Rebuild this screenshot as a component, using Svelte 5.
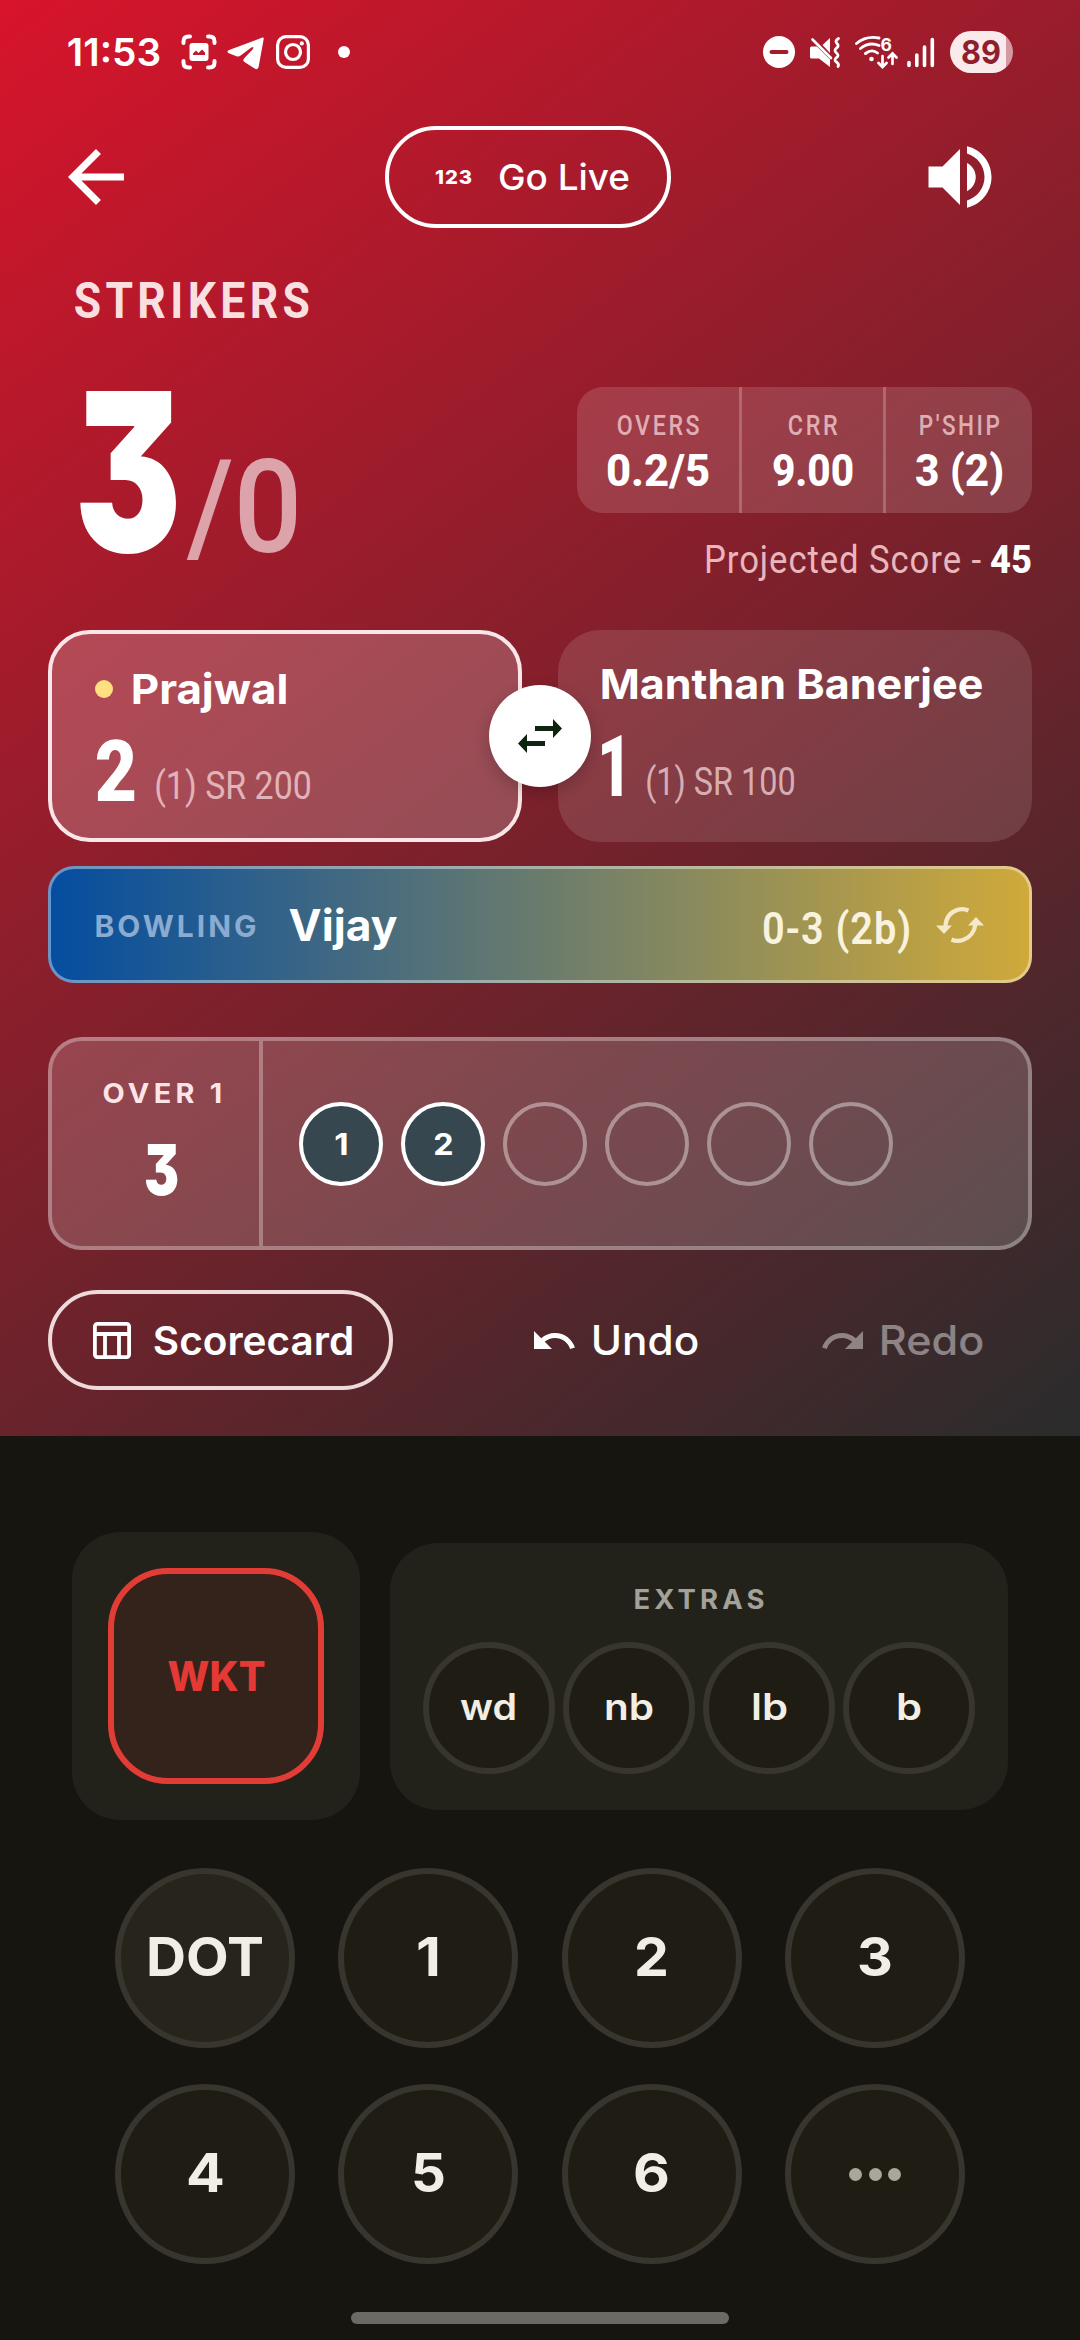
<script>
  const stats = [
    { label: 'OVERS', lw: 80, value: '0.2/5', vw: 100, cls: 'overs' },
    { label: 'CRR', lw: 47, value: '9.00', vw: 78, cls: 'crr' },
    { label: "P'SHIP", lw: 78, value: '3 (2)', vw: 85, cls: 'pship' }
  ];
  const balls = ['1', '2', '', '', '', ''];
  const extras = [
    { t: 'wd', w: 53 },
    { t: 'nb', w: 46 },
    { t: 'lb', w: 33 },
    { t: 'b', w: 22 }
  ];
  const keys = [
    { t: 'DOT', w: 112 },
    { t: '1', w: 19 },
    { t: '2', w: 29 },
    { t: '3', w: 30 },
    { t: '4', w: 33 },
    { t: '5', w: 29 },
    { t: '6', w: 31 },
    { t: '', w: 0 }
  ];
  const CAP = { sans: 0.727, cond: 0.711 };
</script>

<!-- Text fitted to a width; h is the cap height and the box bottom is the baseline. -->
{#snippet fit(text, w, h, face, weight, ls = 0, bear = 0.055)}
  {@const size = h / CAP[face]}
  {@const b = size * bear * (face === 'cond' ? 0.85 : 1)}
  <svg class="fit {face}" width={w} height={h}>
    <text x={-b} y={h} font-size={size} font-weight={weight} letter-spacing={ls}
      textLength={w + 2 * b + ls} lengthAdjust="spacingAndGlyphs">{text}</text>
  </svg>
{/snippet}

<div class="screen">
  <section class="hero">
    <div class="status">
      <div class="status-left">
        {@render fit('11:53', 92, 28, 'sans', 600, 0, 0.03)}
        <svg class="i-shot" width="36" height="36" viewBox="0 0 36 36" fill="none" stroke="#fff" stroke-width="4" stroke-linecap="round">
          <path d="M2.500 9V7.500q0-5 5-5H9M27 2.500h1.500q5 0 5 5V9M33.500 27v1.500q0 5-5 5H27M9 33.500H7.500q-5 0-5-5V27" />
          <rect x="8.500" y="9" width="19" height="18" rx="3" fill="#fff" stroke="none" />
          <path d="M12 21v-1.500l3-3 2.500 2.500 3.500-3.500 3 3V21z" fill="#c41830" stroke="none" />
        </svg>
        <svg class="i-plane" width="37" height="33" viewBox="0 0 37 33" fill="#fff">
          <path d="M35.500.5 1.500 13.200Q-.8 14.800 1.800 16.300L9.500 19.300Q12 20 14 18.300L24 10.800Q28 8.800 25.500 12.500L17 21.500Q15.300 23.800 17.800 25.300L28 31.800Q31 33 31.600 30L36.700 2Q36.900 0 35.500.5Z" />
        </svg>
        <svg class="i-insta" width="34" height="34" viewBox="0 0 34 34" fill="none" stroke="#fff" stroke-width="3.200">
          <rect x="1.600" y="1.600" width="30.800" height="30.800" rx="8.500" />
          <circle cx="17" cy="17" r="7.500" />
          <circle cx="25.800" cy="8.400" r="2.100" fill="#fff" stroke="none" />
        </svg>
        <span class="more"></span>
      </div>
      <div class="status-right">
        <svg class="i-dnd" width="32" height="32" viewBox="0 0 32 32">
          <circle cx="16" cy="16" r="16" fill="#fff" />
          <path d="M8.500 16h15" stroke="#a41b2b" stroke-width="4" stroke-linecap="round" />
        </svg>
        <svg class="i-mute" width="30" height="31" viewBox="0 0 30 31" fill="none" stroke="#fff">
          <path d="M0 11q0-1.500 1.500-1.500H7L20 22.500V30L9 21.500H1.500Q0 21.500 0 20zM20 1v15L12.500 8z" fill="#fff" stroke="none" />
          <path d="M2.500 2.500 21 21" stroke-width="2.600" stroke-linecap="round" />
          <path d="M28.500 1.500q-4 2.500-1.500 5t-.5 4.500q-3 2.500 0 5t0 4.500q-3 2.500 0 4.500t1.500 4.500" stroke-width="2.800" stroke-linecap="round" />
        </svg>
        <svg class="i-wifi" width="43" height="34" viewBox="0 0 43 34" fill="none" stroke="#fff" stroke-width="2.900" stroke-linecap="round">
          <path d="M1.500 8.500Q11 .5 24 3M5.500 13.500Q14 6.500 24 10.500M10.500 18.500Q17 13.500 22.500 18" />
          <circle cx="16.500" cy="24" r="2.300" fill="#fff" stroke="none" />
          <text class="six" x="25.500" y="15.500">6</text>
          <path d="M27.500 21v10M23.500 28l4 4 4-4M37.500 29V19M33.500 22.500l4-4 4 4" stroke-width="2.700" />
        </svg>
        <svg class="i-signal" width="28" height="31" viewBox="0 0 28 31" stroke="#fff" stroke-width="3.600" stroke-linecap="round">
          <path d="M2 25.500v3M9.800 18v10.500M17.500 10v18.500M25.300 2.500v26" />
        </svg>
        <div class="battery">{@render fit('89', 38, 24, 'sans', 700, 0, 0.03)}</div>
      </div>
    </div>

    <header class="topbar">
      <svg width="84" height="84" viewBox="0 0 24 24" fill="#fff">
        <path d="M20 11H7.830l5.590-5.590L12 4l-8 8 8 8 1.410-1.410L7.830 13H20v-2z" />
      </svg>
      <div class="live">
        {@render fit('123', 35, 14, 'sans', 800, 1)}
        {@render fit('Go Live', 128, 26, 'sans', 500)}
      </div>
      <svg width="84" height="84" viewBox="0 0 24 24" fill="#fff">
        <path d="M3 9v6h4l5 5V4L7 9H3zm11-1v8.050c1.480-.73 2.500-2.250 2.500-4.020S15.480 8.740 14 8zM14 3.230v2.060c2.890.86 5 3.540 5 6.710s-2.110 5.850-5 6.710v2.060c4.010-.91 7-4.490 7-8.770s-2.990-7.860-7-8.770z" />
      </svg>
    </header>

    <div class="team">{@render fit('STRIKERS', 231, 36, 'cond', 700, 5)}</div>

    <div class="summary">
      <div class="score">
        {@render fit('3', 98, 161, 'sans', 900, 0, 0.02)}
        <span class="wickets">{@render fit('/0', 111, 92, 'cond', 500, 0, 0.02)}</span>
      </div>
      <div class="figures">
        <div class="stats">
          {#each stats as s}
            <div class="stat {s.cls}">
              <span class="dim">{@render fit(s.label, s.lw, 19, 'cond', 500, 3)}</span>
              {@render fit(s.value, s.vw, 32, 'cond', 800)}
            </div>
          {/each}
        </div>
        <div class="projected">
          <span class="soft">{@render fit('Projected Score -', 275, 27, 'cond', 400, 1, 0.03)}</span>
          {@render fit('45', 40, 27, 'cond', 800, 0, 0.03)}
        </div>
      </div>
    </div>

    <div class="batters">
      <div class="batter on">
        <div class="name"><i class="strike"></i>{@render fit('Prajwal', 153, 30, 'sans', 700)}</div>
        <div class="runs">
          {@render fit('2', 38, 60, 'cond', 900, 0, 0.03)}
          <span class="dim sr">{@render fit('(1) SR 200', 154, 27, 'cond', 400)}</span>
        </div>
      </div>
      <div class="batter">
        <div class="name">{@render fit('Manthan Banerjee', 379, 30, 'sans', 700)}</div>
        <div class="runs">
          {@render fit('1', 23, 60, 'cond', 900, 0, 0.08)}
          <span class="dim sr">{@render fit('(1) SR 100', 147, 27, 'cond', 400)}</span>
        </div>
      </div>
      <div class="swap">
        <svg width="44" height="34" viewBox="0 0 44 34" fill="#0c2410">
          <path d="M17 7h18V0l9 9.500-9 9.500v-7H17zM27 22H9v-7l-9 9.500L9 34v-7h18z" />
        </svg>
      </div>
    </div>

    <div class="bowler">
      <span class="tag">{@render fit('BOWLING', 159, 21.5, 'sans', 700, 3)}</span>
      {@render fit('Vijay', 108, 32, 'sans', 700, 0, 0.01)}
      <span class="spell">{@render fit('0-3 (2b)', 145, 31, 'cond', 600, 1)}</span>
      <svg class="cycle" width="48" height="36" viewBox="0 0 48 36" fill="none" stroke="#f4e8c8" stroke-width="4.200">
        <path d="M32.500 3.500Q27 1 21 3 10 7 9.500 19M15.500 32.500Q21 35 27 33 38 29 39.500 17" />
        <path d="M0 18.500h16L8 27zM32 18.500h16L40 10z" fill="#f4e8c8" stroke="none" />
      </svg>
    </div>

    <div class="over">
      <div class="over-sum">
        <span class="over-label">{@render fit('OVER 1', 117, 19.5, 'sans', 700, 4)}</span>
        <span class="over-runs">{@render fit('3', 33, 51, 'sans', 900, 0, 0.015)}</span>
      </div>
      <div class="balls">
        {#each balls as b}
          <div class="ball" class:done={b}>
            {#if b}{@render fit(b, b === '1' ? 11 : 17, 22, 'sans', 700)}{/if}
          </div>
        {/each}
      </div>
    </div>

    <div class="actions">
      <div class="scorecard">
        <svg width="38" height="37" viewBox="0 0 38 37" fill="none" stroke="#fff" stroke-width="3.800">
          <rect x="1.900" y="1.900" width="34.200" height="33.200" rx="2.500" />
          <path d="M2 12h34M12 12v23M26 12v23" />
        </svg>
        {@render fit('Scorecard', 197, 28.5, 'sans', 600)}
      </div>
      <div class="undo">
        <svg width="41" height="18" viewBox="2 7 20.500 9" fill="#fff">
          <path d="M12.500 8c-2.650 0-5.050.99-6.900 2.600L2 7v9h9l-3.620-3.620c1.390-1.160 3.160-1.880 5.120-1.880 3.540 0 6.550 2.310 7.600 5.500l2.370-.78C21.080 11.030 17.150 8 12.500 8z" />
        </svg>
        {@render fit('Undo', 104, 29.5, 'sans', 500)}
      </div>
      <div class="undo off">
        <svg width="41" height="18" viewBox="1.500 7 20.500 9" fill="#fff">
          <path d="M18.400 10.600C16.550 8.990 14.150 8 11.500 8c-4.650 0-8.580 3.030-9.960 7.220L3.900 16c1.050-3.190 4.050-5.500 7.600-5.500 1.950 0 3.730.72 5.120 1.880L13 16h9V7l-3.600 3.600z" />
        </svg>
        {@render fit('Redo', 101, 29.5, 'sans', 500)}
      </div>
    </div>
  </section>

  <section class="pad">
    <div class="special">
      <div class="wkt-card">
        <div class="wkt">{@render fit('WKT', 97, 29.5, 'sans', 800, 0, 0.01)}</div>
      </div>
      <div class="extras">
        <span class="extras-label">{@render fit('EXTRAS', 128, 19.5, 'sans', 700, 4)}</span>
        <div class="extras-row">
          {#each extras as e}
            <div class="extra">{@render fit(e.t, e.w, 26.5, 'sans', 600)}</div>
          {/each}
        </div>
      </div>
    </div>
    <div class="keys">
      {#each keys as k, i}
        <div class="key" class:dot={i === 0}>
          {#if k.t}
            {@render fit(k.t, k.w, 39, 'sans', 700)}
          {:else}
            <span class="dots"><i></i><i></i><i></i></span>
          {/if}
        </div>
      {/each}
    </div>
    <div class="home"></div>
  </section>
</div>

<style>
  :global(body) { background: #16150f; }
  .screen {
    width: 1080px; height: 2340px; display: flex; flex-direction: column;
    background: #16150f; color: #fff; overflow: hidden;
    font-family: Inter, "Liberation Sans", sans-serif;
  }
  svg { display: block; flex: none; }
  .fit { overflow: visible; }
  .fit text { fill: currentColor; white-space: pre; }
  .sans { font-family: Inter, "Liberation Sans", sans-serif; }
  .score .sans, .over-runs .sans { font-feature-settings: "cv09"; }
  .cond { font-family: Roboto, "Liberation Sans", sans-serif; }

  .hero {
    height: 1436px; flex: none; box-sizing: border-box; padding: 0 48px;
    display: flex; flex-direction: column;
    background: linear-gradient(143deg, #d8142b, #2a2c2c);
  }
  .status {
    height: 104px; flex: none; display: flex; align-items: center;
    justify-content: space-between; padding: 0 19px 0 20px;
  }
  .status-left, .status-right { display: flex; align-items: center; }
  .i-shot { margin-left: 21px; }
  .i-plane { margin-left: 10px; margin-top: 3px; }
  .i-insta { margin-left: 12px; }
  .more { width: 12px; height: 12px; border-radius: 50%; background: #fff; margin-left: 28px; }
  .i-mute { margin-left: 15px; }
  .i-wifi { margin-left: 15px; }
  .i-signal { margin-left: 9px; }
  .six { font: 700 17.500px Inter, sans-serif; fill: #fff; stroke: none; }
  .battery {
    box-sizing: border-box; width: 63px; height: 42px; margin-left: 15px; border-radius: 21px;
    background: linear-gradient(90deg, #faeaec 0 56px, #d49aa2 56px);
    color: #8f1f2c; display: flex; align-items: center; padding-left: 12px;
  }

  .topbar {
    margin: 21px 30px 0 6px; height: 104px; flex: none; display: flex;
    align-items: center; justify-content: space-between;
  }
  .live {
    box-sizing: border-box; width: 286px; height: 102px; border: 4.500px solid #fff;
    border-radius: 51px; display: flex; align-items: center; gap: 29px; padding-left: 47px;
  }
  .team { margin: 53px 0 0 28px; color: #fadfe1; }

  .summary { display: flex; justify-content: space-between; margin-top: 69px; height: 200px; flex: none; }
  .score { display: flex; align-items: flex-end; height: 165px; padding-left: 31px; gap: 12px; }
  .wickets { color: #dca4aa; }
  .figures { width: 455px; }
  .stats {
    height: 126px; display: grid; grid-template-columns: 165px 144px 146px;
    border-radius: 26px; background: rgba(255, 255, 255, .14);
  }
  .stat {
    box-sizing: border-box; display: flex; flex-direction: column; align-items: center;
    padding-top: 29px; gap: 19px;
  }
  .overs, .crr { border-right: 3px solid rgba(255, 255, 255, .22); }
  .dim { color: rgba(255, 225, 228, .7); }
  .soft { color: #e8b6bb; }
  .projected { margin-top: 33px; display: flex; justify-content: flex-end; gap: 11px; padding-right: 1px; }

  .batters { position: relative; display: grid; grid-template-columns: 1fr 1fr; gap: 36px; margin-top: 43px; height: 212px; flex: none; }
  .batter {
    box-sizing: border-box; border-radius: 42px; background: rgba(255, 255, 255, .12);
    padding: 39px 44px 0; display: flex; flex-direction: column; gap: 37px;
  }
  .batter.on { background: rgba(255, 255, 255, .2); border: 4.500px solid #fae6e8; padding-top: 39.500px; }
  .name { display: flex; align-items: center; }
  .on .name { margin-left: -1px; }
  .strike { width: 18px; height: 18px; border-radius: 50%; background: #ffdf80; margin-right: 20px; }
  .runs { display: flex; align-items: flex-end; gap: 21px; padding-left: 1px; }
  .sr { margin-bottom: 1.500px; }
  .swap {
    position: absolute; left: 441px; top: 55px; width: 102px; height: 102px; border-radius: 50%;
    background: #fff; display: flex; align-items: center; justify-content: center;
    box-shadow: 0 6px 16px rgba(0, 0, 0, .2);
  }

  .bowler {
    box-sizing: border-box; height: 117px; flex: none; margin-top: 24px; border-radius: 26px;
    border: 3px solid rgba(255, 255, 255, .4); display: flex; align-items: center; padding: 0 45px;
    background: linear-gradient(90deg, #044da0, #d0aa3a) border-box;
  }
  .tag { color: #8babd0; margin-top: 2px; margin-right: 34px; }
  .spell { margin-left: auto; color: #f8f2de; margin-top: 8px; }
  .cycle { margin-left: 27px; }

  .over {
    box-sizing: border-box; height: 213px; flex: none; margin-top: 54px; display: flex;
    border: 4.500px solid rgba(255, 255, 255, .3); border-radius: 34px;
    background: rgba(255, 255, 255, .17);
  }
  .over-sum {
    box-sizing: border-box; width: 211px; border-right: 4.500px solid rgba(255, 255, 255, .3);
    display: flex; flex-direction: column; align-items: center; padding-top: 41.500px; gap: 42px;
  }
  .over-label { color: #fde4e6; margin-left: 13px; }
  .over-runs { margin-left: 11px; }
  .balls { display: flex; align-items: center; gap: 18px; padding-left: 36px; }
  .ball {
    box-sizing: border-box; width: 84px; height: 84px; border-radius: 50%;
    border: 4.500px solid rgba(255, 255, 255, .4); display: flex; align-items: center; justify-content: center;
  }
  .ball.done { background: #37474f; border-color: #fff; }

  .actions { margin-top: 40px; height: 100px; flex: none; display: flex; align-items: center; }
  .scorecard {
    box-sizing: border-box; width: 345px; height: 100px; border: 4px solid #eed9db; border-radius: 50px;
    display: flex; align-items: center; padding-left: 41px; gap: 24px; margin-right: 141px;
  }
  .undo { display: flex; align-items: center; gap: 18px; margin-right: 125px; }
  .off { margin-right: 0; opacity: .42; }

  .pad { flex: 1; display: flex; flex-direction: column; padding: 96px 72px 0; }
  .special { display: flex; align-items: center; gap: 30px; height: 288px; flex: none; }
  .wkt-card {
    width: 288px; height: 288px; border-radius: 48px; background: #22221a;
    display: flex; align-items: center; justify-content: center;
  }
  .wkt {
    box-sizing: border-box; width: 216px; height: 216px; border: 6px solid #e23c37; border-radius: 60px;
    background: #33231b; color: #e53935; display: flex; align-items: center; justify-content: center;
  }
  .extras {
    box-sizing: border-box; width: 618px; height: 267px; border-radius: 48px; background: #22221a;
    display: flex; flex-direction: column; align-items: center; padding-top: 46.500px; gap: 33px;
  }
  .extras-label { color: #a3a199; }
  .extras-row { display: flex; gap: 8.300px; }
  .extra, .key {
    box-sizing: border-box; width: 132px; height: 132px; border-radius: 50%; border: 6px solid #37352d;
    background: #1f1c14; color: #f1eee5; display: flex; align-items: center; justify-content: center;
    padding-bottom: 3px;
  }
  .keys { display: grid; grid-template-columns: repeat(4, 180px); gap: 36px 43.400px; padding-left: 43px; margin-top: 48px; }
  .key { width: 180px; height: 180px; }
  .key.dot { background: #27241b; }
  .dots { display: flex; gap: 6.500px; padding-top: 3px; }
  .dots i { width: 13px; height: 13px; border-radius: 50%; background: #a9a69c; }
  .home { width: 378px; height: 12px; border-radius: 6px; background: #6c6a64; margin: 48px auto 0; }
</style>
